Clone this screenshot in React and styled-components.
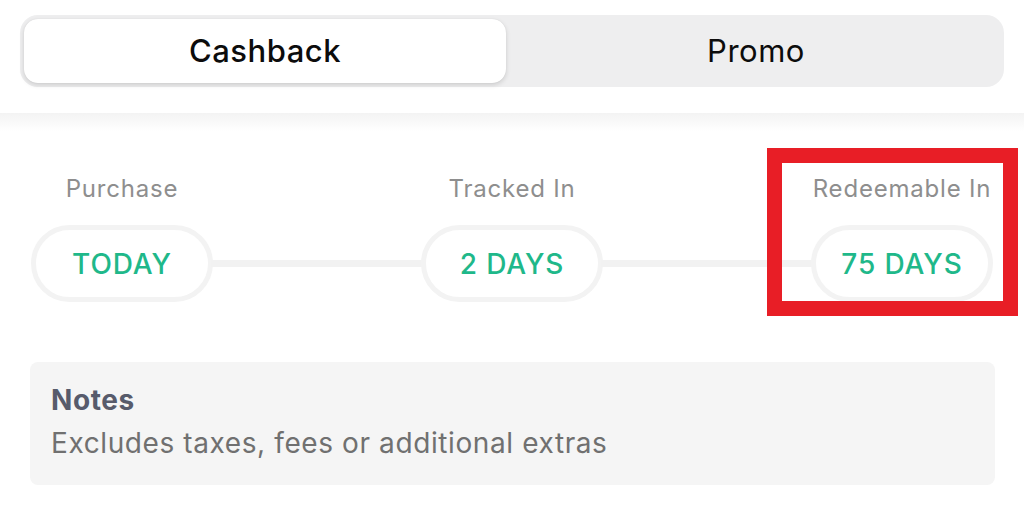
import React from "react";
import styled, { createGlobalStyle } from "styled-components";

const Global = createGlobalStyle`
  html, body { margin: 0; padding: 0; background: #ffffff; }
  body { font-family: Inter, "Noto Sans", "Liberation Sans", sans-serif; -webkit-font-smoothing: antialiased; }
  * { box-sizing: border-box; }
`;

const Page = styled.div`
  position: relative;
  width: 1024px;
  height: 508px;
  overflow: hidden;
  background: #ffffff;
`;

const Header = styled.div`
  padding: 15px 20px 26px;
`;

const Segmented = styled.div`
  display: grid;
  grid-template-columns: 1fr 1fr;
  height: 72px;
  padding: 4px;
  background: #eeeeef;
  border-radius: 18px;
`;

const Segment = styled.div`
  display: flex;
  align-items: center;
  justify-content: center;
  padding-bottom: 2px;
  margin-right: ${(p) => (p.$active ? "6px" : "0")};
  border-radius: 14px;
  font-size: 31px;
  letter-spacing: 0.5px;
  color: #0c0c0c;
  font-weight: ${(p) => (p.$active ? 500 : 400)};
  background: ${(p) => (p.$active ? "#ffffff" : "transparent")};
  box-shadow: ${(p) => (p.$active ? "0 2px 5px rgba(0,0,0,0.14), 0 0 1px rgba(0,0,0,0.1)" : "none")};
`;

const ShadowBand = styled.div`
  height: 18px;
  background: linear-gradient(#f3f3f3, #ffffff);
`;

const Steps = styled.div`
  display: grid;
  grid-template-columns: 182px 1fr 182px 1fr 182px;
  grid-template-rows: 28px 77px;
  row-gap: 22px;
  padding: 44px 31px 0;
`;

const Label = styled.div`
  grid-row: 1;
  grid-column: ${(p) => p.$col};
  text-align: center;
  font-size: 24px;
  line-height: 28px;
  color: #8e8e8e;
  white-space: nowrap;
  letter-spacing: 0.8px;
`;

const Pill = styled.div`
  grid-row: 2;
  grid-column: ${(p) => p.$col};
  display: flex;
  align-items: center;
  justify-content: center;
  border: 5px solid #f3f3f3;
  border-radius: 40px;
  background: #ffffff;
  color: #1fb88a;
  font-size: 28px;
  font-weight: 500;
  letter-spacing: 0.9px;
  white-space: nowrap;
`;

const Connector = styled.div`
  grid-row: 2;
  grid-column: ${(p) => p.$col};
  align-self: center;
  height: 7px;
  margin: 0 -2px;
  background: #f2f2f2;
`;

const NotesCard = styled.div`
  margin: 60px 29px 0 30px;
  padding: 22px 21px 25px;
  background: #f5f5f5;
  border-radius: 8px;
`;

const NotesTitle = styled.div`
  font-size: 28px;
  line-height: 32px;
  font-weight: 700;
  letter-spacing: 0.6px;
  color: #575b6b;
`;

const NotesBody = styled.div`
  margin-top: 10px;
  font-size: 28px;
  line-height: 34px;
  letter-spacing: 0.6px;
  color: #707070;
`;

const Highlight = styled.div`
  position: absolute;
  left: 767px;
  top: 148px;
  width: 251px;
  height: 168px;
  border: 15px solid #e81e26;
  pointer-events: none;
`;

const steps = [
  { label: "Purchase", value: "TODAY" },
  { label: "Tracked In", value: "2 DAYS" },
  { label: "Redeemable In", value: "75 DAYS" },
];

export default function App() {
  return (
    <Page>
      <Global />
      <Header>
        <Segmented>
          <Segment $active>Cashback</Segment>
          <Segment>Promo</Segment>
        </Segmented>
      </Header>
      <ShadowBand />
      <Steps>
        {steps.map((s, i) => (
          <React.Fragment key={s.label}>
            <Label $col={i * 2 + 1}>{s.label}</Label>
            <Pill $col={i * 2 + 1}>{s.value}</Pill>
            {i < steps.length - 1 && <Connector $col={i * 2 + 2} />}
          </React.Fragment>
        ))}
      </Steps>
      <NotesCard>
        <NotesTitle>Notes</NotesTitle>
        <NotesBody>Excludes taxes, fees or additional extras</NotesBody>
      </NotesCard>
      <Highlight />
    </Page>
  );
}
